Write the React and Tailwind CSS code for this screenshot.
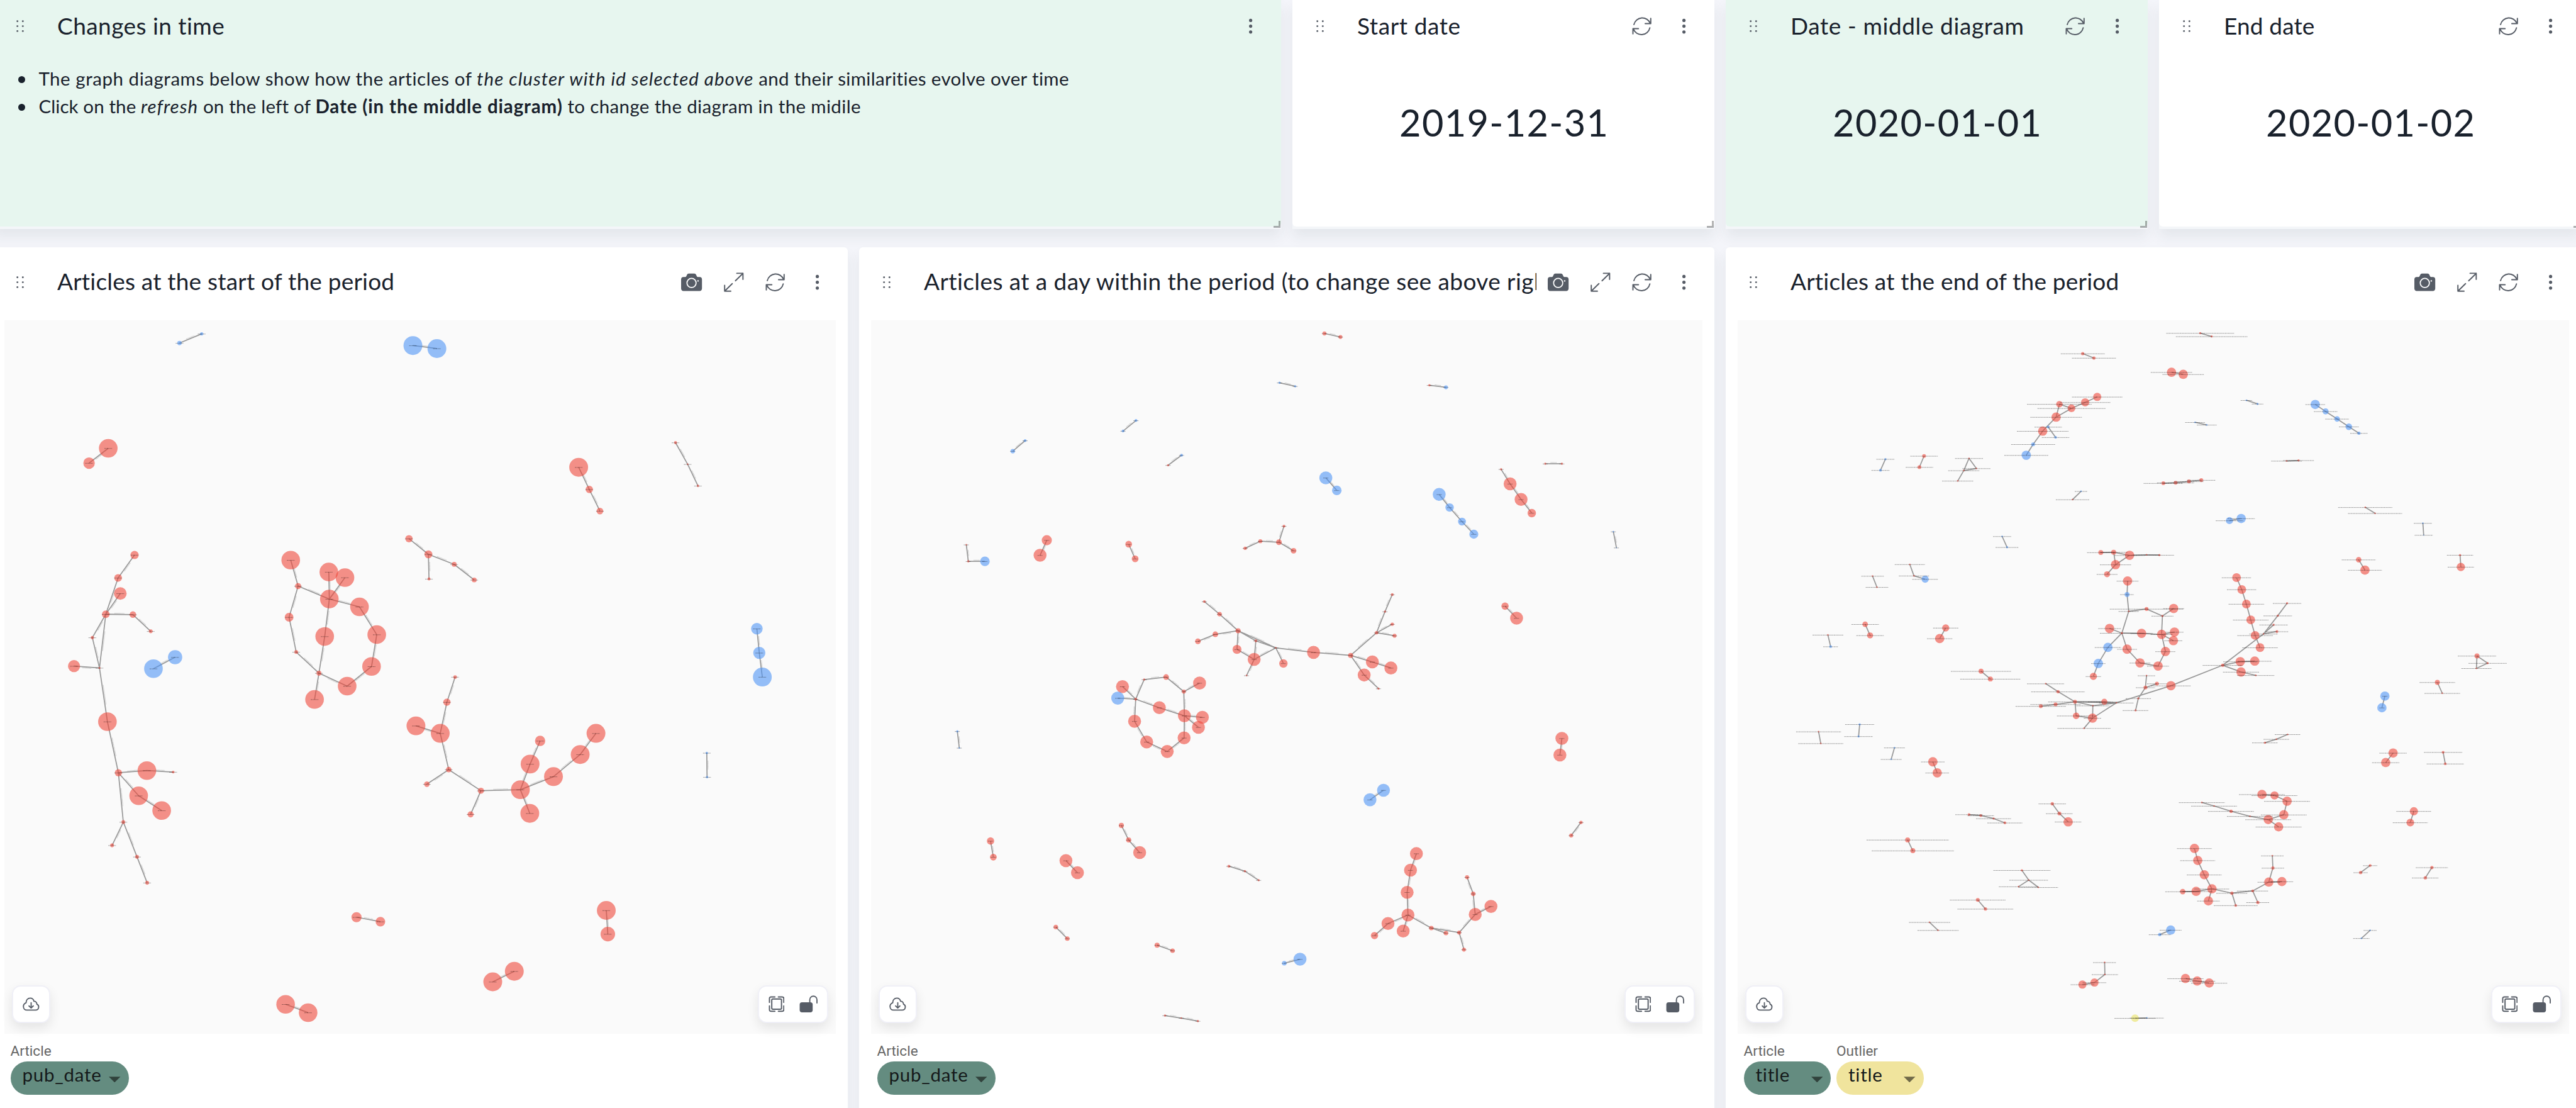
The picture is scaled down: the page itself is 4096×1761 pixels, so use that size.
import React from "react";

/* ------------------------------------------------------------------ */
/* Graph data. Each section has its own origin and unit; a cluster is  */
/* a list of nodes [x, y, r, labelHalfWidth, tone] plus edge pairs.    */
/* Clusters without edge pairs are simple chains.                      */
/* ------------------------------------------------------------------ */

const b = "b";

const START = [
  {
    o: [0, 550], s: [0.472, 0.6378], h: 14,
    c: [
      { n: [[656, 64, 8, 0, b], [737, 39, 6, 0, b]] },
      { n: [[396, 348, 34], [326, 388, 21]] },
      {
        n: [[492, 636, 15], [432, 698, 14], [440, 740, 23], [387, 796, 14], [486, 797, 12], [551, 842, 7], [338, 859, 6], [364, 941, 4], [271, 936, 22], [393, 1086, 34], [433, 1224, 13], [537, 1218, 34], [633, 1222, 5], [507, 1286, 34], [591, 1326, 34], [451, 1357, 7], [410, 1420, 7], [501, 1451, 7], [538, 1521, 7]],
        e: [[0, 1], [1, 3], [2, 3], [3, 4], [4, 5], [3, 6], [6, 7], [3, 7], [7, 8], [7, 9], [9, 10], [10, 11], [11, 12], [10, 13], [13, 14], [10, 15], [15, 16], [15, 17], [17, 18]],
      },
      { n: [[561, 943, 34, 0, b], [640, 912, 26, 0, b]] },
      {
        n: [[1062, 650, 34], [1089, 720, 11], [1056, 804, 16], [1082, 898, 7], [1165, 955, 9], [1149, 1026, 34], [1201, 682, 34], [1260, 697, 34], [1203, 755, 34], [1186, 856, 34], [1313, 776, 34], [1376, 851, 34], [1357, 937, 34], [1268, 990, 34]],
        e: [[0, 1], [1, 2], [2, 3], [3, 4], [4, 5], [1, 8], [6, 8], [7, 8], [8, 9], [9, 4], [8, 10], [10, 11], [11, 12], [12, 13], [13, 4]],
      },
    ],
  },
  {
    o: [660, 550], s: [0.523, 0.8661], h: 12.5,
    c: [
      { n: [[99, 52, 31, 0, b], [178, 58, 31, 0, b]] },
      { n: [[645, 294, 31], [680, 338, 12], [715, 381, 11]] },
      { n: [[964, 245, 5], [1004, 288, 3], [1038, 331, 4]] },
      { n: [[86, 436, 12], [150, 467, 13], [152, 516, 5], [235, 487, 8], [301, 518, 8]], e: [[0, 1], [1, 2], [1, 3], [3, 4]] },
      { n: [[1232, 615, 19, 0, b], [1240, 663, 20, 0, b], [1250, 711, 31, 0, b]] },
      { n: [[1067, 862, 4, 0, b], [1068, 910, 4, 0, b]] },
      {
        n: [[238, 711, 6], [211, 761, 12], [189, 823, 31], [109, 808, 31], [217, 895, 9], [145, 924, 9], [323, 937, 10], [289, 984, 10], [453, 935, 31], [485, 884, 31], [518, 838, 17], [484, 982, 31], [562, 909, 31], [650, 865, 31], [702, 823, 31]],
        e: [[0, 1], [1, 2], [2, 3], [2, 4], [4, 5], [4, 6], [6, 7], [6, 8], [8, 9], [9, 10], [8, 11], [8, 12], [12, 13], [13, 14]],
      },
      { n: [[736, 1175, 31], [741, 1222, 24]] },
      { n: [[362, 1317, 31], [433, 1296, 31]] },
    ],
  },
  {
    o: [0, 1500], s: [0.4847, 0.3333], h: 13.5,
    c: [{ n: [[1268, 238, 18], [1353, 261, 17]] }, { n: [[1016, 688, 33], [1096, 731, 33]] }],
  },
];

const MIDDLE = [
  {
    o: [1480, 550], s: [0.4847, 0.8661], h: 9,
    c: [
      { n: [[545, 262, 8, 0, b], [589, 241, 5, 0, b]] },
      { n: [[937, 222, 5, 0, b], [983, 201, 5, 0, b]] },
      { n: [[1097, 290, 4], [1145, 270, 5, 0, b]] },
      { n: [[1493, 126, 4, 0, b], [1549, 133, 4, 0, b]] },
      { n: [[380, 448, 3], [387, 481, 4], [446, 481, 17, 0, b]] },
      { n: [[666, 439, 18], [642, 469, 23]] },
      { n: [[957, 447, 12], [980, 476, 12]] },
      { n: [[1371, 455, 6], [1425, 441, 7], [1491, 443, 10], [1509, 411, 5], [1543, 460, 10]], e: [[0, 1], [1, 2], [2, 3], [2, 4]] },
      {
        n: [[1226, 561, 5], [1280, 586, 8], [1346, 619, 9], [1265, 626, 10], [1203, 640, 10], [1342, 656, 16], [1409, 639, 5], [1403, 676, 23], [1376, 708, 3], [1480, 653, 3], [1507, 684, 15], [1614, 662, 23], [1746, 668, 9], [1838, 623, 6], [1868, 581, 4], [1894, 547, 5], [1894, 606, 6], [1902, 629, 7], [1823, 681, 23], [1889, 693, 23], [1794, 707, 23], [1845, 734, 4]],
        e: [[0, 1], [1, 2], [2, 3], [3, 4], [2, 5], [5, 7], [2, 6], [2, 9], [6, 7], [7, 8], [7, 9], [6, 9], [9, 10], [9, 11], [11, 12], [12, 13], [13, 14], [14, 15], [13, 16], [13, 17], [12, 18], [18, 19], [12, 20], [20, 21]],
      },
      {
        n: [[935, 730, 23], [918, 753, 23, 0, b], [982, 755, 5], [1012, 716, 4], [1090, 711, 10], [1153, 740, 7], [1209, 723, 23], [1066, 772, 23], [1155, 788, 23], [1219, 791, 23], [1205, 811, 23], [1154, 832, 23], [1094, 859, 23], [1021, 840, 23], [978, 799, 23]],
        e: [[0, 2], [1, 2], [2, 3], [3, 4], [4, 5], [5, 6], [5, 8], [2, 7], [7, 8], [8, 9], [8, 10], [8, 11], [11, 12], [12, 13], [13, 14], [14, 2]],
      },
      { n: [[348, 819, 4, 0, b], [355, 852, 3, 0, b]] },
      { n: [[466, 1037, 13], [476, 1069, 12]] },
      { n: [[734, 1076, 23], [775, 1100, 23]] },
      { n: [[931, 1006, 9], [957, 1035, 9], [996, 1060, 23]] },
      { n: [[1313, 1087, 5], [1370, 1097, 4], [1419, 1115, 4]] },
      { n: [[698, 1208, 8], [739, 1231, 8]] },
      { n: [[1058, 1244, 9], [1113, 1255, 8]] },
      { n: [[1510, 1280, 8, 0, b], [1566, 1272, 23, 0, b]] },
      { n: [[1086, 1384, 4], [1144, 1389, 3], [1203, 1395, 4]] },
    ],
  },
  {
    o: [2220, 550], s: [0.4847, 0.8661], h: 9,
    c: [
      { n: [[126, 28, 7], [183, 35, 7]] },
      { n: [[499, 131, 4], [558, 135, 7, 0, b]] },
      { n: [[131, 315, 23, 0, b], [170, 340, 17, 0, b]] },
      { n: [[534, 348, 23, 0, b], [571, 374, 15, 0, b], [615, 402, 14, 0, b], [657, 427, 16, 0, b]] },
      { n: [[754, 298, 4], [786, 327, 23], [825, 358, 23], [863, 385, 15]] },
      { n: [[911, 287, 4], [970, 287, 4]] },
      { n: [[1153, 422, 3, 0, b], [1164, 454, 2, 0, b]] },
      { n: [[768, 570, 13], [809, 594, 23]] },
      { n: [[970, 833, 23], [963, 866, 23]] },
      { n: [[288, 955, 23, 0, b], [336, 936, 23, 0, b]] },
      { n: [[1038, 1000, 6], [1003, 1026, 7]] },
      {
        n: [[453, 1062, 23], [432, 1095, 23], [420, 1139, 23], [423, 1184, 23], [352, 1201, 23], [304, 1225, 13], [406, 1216, 23], [506, 1210, 8], [558, 1220, 8], [605, 1219, 7], [622, 1253, 7], [662, 1183, 23], [718, 1167, 23], [655, 1142, 8], [633, 1109, 7]],
        e: [[0, 1], [1, 2], [2, 3], [3, 4], [4, 5], [3, 6], [3, 7], [7, 8], [7, 9], [9, 10], [9, 11], [11, 12], [11, 13], [13, 14]],
      },
    ],
  },
];

const END = [
  {
    o: [2980, 550], s: [0.472, 0.4464], h: 50,
    c: [
      { n: [[1289, 132, 6, 80], [1330, 149, 6, 80]] },
      {
        n: [[1342, 299, 15, 92], [1298, 320, 15, 92], [1248, 343, 14, 124], [1204, 327, 12, 118], [1192, 377, 17, 94], [1143, 431, 17, 94], [1108, 482, 7, 80, b], [1083, 524, 17, 80, b]],
        e: [[0, 1], [1, 2], [2, 3], [2, 4], [3, 4], [4, 5], [5, 6], [6, 7]],
      },
      { n: [[1163, 415, 5, 50, b], [1190, 455, 5, 50, b]] },
      { n: [[569, 539, 4, 33, b], [551, 582, 5, 33, b]] },
      { n: [[710, 527, 7, 50], [693, 570, 7, 50]] },
      { n: [[874, 536, 3, 51], [901, 575, 3, 51], [855, 583, 3, 57], [833, 623, 3, 57]], e: [[0, 1], [1, 2], [0, 2], [2, 3]] },
      { n: [[1283, 663, 3, 23, b], [1252, 695, 3, 61]] },
      { n: [[995, 837, 3, 33, b], [1013, 879, 4, 42, b]] },
      { n: [[658, 945, 3, 55], [673, 989, 3, 55], [714, 1002, 13, 47, b]] },
      { n: [[522, 990, 3, 41], [538, 1033, 3, 41]] },
      { n: [[495, 1176, 10, 50], [513, 1219, 11, 50]] },
      { n: [[359, 1217, 3, 56], [369, 1262, 5, 27, b]] },
      { n: [[789, 1190, 13, 46], [767, 1231, 17, 46]] },
      { n: [[918, 1357, 9, 110], [952, 1387, 9, 110]] },
      {
        n: [[1355, 899, 9, 50], [1402, 898, 9, 50], [1460, 910, 17, 55], [1409, 946, 17, 57], [1378, 983, 11, 38], [1522, 908, 3, 50], [1569, 909, 4, 54]],
        e: [[0, 1], [1, 2], [1, 3], [2, 3], [3, 4], [2, 5], [5, 6]],
      },
      {
        n: [[1453, 1009, 17, 40], [1451, 1061, 9, 25, b], [1457, 1126, 3, 37], [1522, 1117, 7, 134], [1580, 1144, 4, 40], [1621, 1115, 17, 38], [1387, 1192, 17, 41], [1432, 1210, 4, 80], [1504, 1211, 17, 40], [1577, 1215, 17, 40], [1624, 1206, 17, 33], [1620, 1239, 17, 33], [1591, 1281, 17, 37], [1564, 1337, 17, 40], [1498, 1325, 17, 38], [1451, 1272, 17, 36], [1381, 1265, 17, 48, b], [1346, 1327, 17, 26, b], [1328, 1377, 13, 28]],
        e: [[0, 1], [1, 2], [2, 3], [3, 4], [4, 5], [4, 9], [2, 7], [6, 7], [7, 8], [8, 9], [9, 10], [9, 11], [9, 12], [12, 13], [13, 14], [14, 15], [15, 7], [7, 16], [16, 17], [17, 18]],
      },
      { n: [[1522, 1374, 3, 32], [1518, 1420, 7, 35], [1560, 1405, 7, 36], [1492, 1462, 4, 46], [1482, 1508, 4, 47]], e: [[0, 1], [1, 2], [1, 3], [3, 4]] },
      {
        n: [[1154, 1405, 3, 68], [1199, 1436, 6, 98], [1261, 1475, 7, 98], [1190, 1485, 7, 92], [1136, 1492, 7, 92], [1265, 1529, 12, 70], [1326, 1490, 3, 60], [1325, 1538, 17, 32], [1368, 1475, 11, 60], [1412, 1479, 3, 63], [1294, 1577, 3, 97], [1611, 1413, 17, 73], [1800, 1334, 6, 73], [1949, 1213, 3, 52], [2001, 1143, 4, 52], [2035, 1095, 4, 52], [1986, 1178, 4, 52], [1998, 1204, 5, 42], [1864, 1320, 17, 62], [1917, 1318, 17, 62], [1867, 1360, 17, 66], [1921, 1373, 3, 68]],
        e: [[0, 1], [1, 2], [2, 3], [3, 4], [2, 5], [5, 7], [2, 6], [6, 7], [2, 8], [8, 9], [6, 9], [7, 9], [7, 10], [2, 9], [9, 11], [11, 12], [12, 13], [13, 14], [14, 15], [13, 16], [13, 17], [12, 18], [18, 19], [12, 20], [20, 21]],
      },
    ],
  },
  {
    o: [3700, 550], s: [0.4707, 0.4464], h: 50,
    c: [
      { n: [[326, 996, 16, 54], [345, 1042, 16, 54], [362, 1098, 16, 65], [378, 1159, 16, 65], [394, 1219, 16, 65], [412, 1266, 16, 65]] },
      { n: [[193, 53, 4, 124], [235, 66, 4, 131]] },
      { n: [[88, 204, 17, 76], [131, 212, 17, 76]] },
      { n: [[362, 312, 3, 21, b], [403, 326, 4, 21, b]] },
      { n: [[174, 397, 3, 36, b], [217, 407, 3, 36, b]] },
      { n: [[614, 328, 17, 36, b], [652, 355, 11, 43, b], [694, 384, 10, 43, b], [737, 414, 12, 36, b], [774, 439, 6, 32, b]] },
      { n: [[509, 546, 3, 56], [553, 544, 4, 56]] },
      { n: [[58, 632, 7, 72], [103, 630, 7, 68], [152, 625, 7, 54], [197, 620, 7, 52]] },
      { n: [[300, 776, 13, 50, b], [343, 768, 17, 50, b]] },
      { n: [[797, 725, 3, 99], [833, 748, 3, 99]] },
      { n: [[1008, 786, 3, 33, b], [1011, 832, 2, 33, b]] },
      { n: [[773, 927, 10, 62], [796, 967, 17, 62]] },
      { n: [[1144, 909, 4, 48], [1147, 955, 15, 48]] },
      { n: [[1206, 1298, 9, 70], [1245, 1326, 4, 70], [1204, 1346, 3, 55]], e: [[0, 1], [1, 2], [2, 0]] },
      { n: [[1061, 1400, 9, 65], [1079, 1442, 3, 65]] },
      { n: [[869, 1453, 17, 9, b], [858, 1498, 17, 9, b]] },
    ],
  },
  {
    o: [2980, 1230], s: [0.472, 0.4324], h: 50,
    c: [
      { n: [[325, 69, 3, 82], [333, 116, 3, 82]] },
      { n: [[475, 40, 4, 53, b], [471, 88, 4, 52, b]] },
      { n: [[602, 133, 3, 38, b], [590, 179, 3, 38, b]] },
      { n: [[742, 189, 17, 43], [758, 233, 17, 43]] },
      { n: [[874, 399, 5, 50], [917, 403, 5, 48], [964, 415, 4, 64], [1005, 432, 5, 64]] },
      { n: [[1178, 356, 6, 50], [1204, 395, 7, 49], [1236, 428, 17, 49]] },
      { n: [[650, 500, 9, 150], [669, 543, 9, 150]] },
      { n: [[1067, 621, 4, 104], [1092, 660, 3, 71], [1055, 686, 3, 72], [1127, 689, 3, 72]], e: [[0, 1], [1, 2], [1, 3]] },
      { n: [[906, 739, 7, 102], [934, 775, 6, 102]] },
      { n: [[730, 828, 3, 75], [761, 860, 3, 75]] },
      { n: [[1369, 988, 3, 42], [1370, 1036, 3, 48], [1332, 1068, 15, 43], [1288, 1076, 15, 43]] },
      { n: [[1480, 1210, 14, 75, "y"], [1523, 1209, 3, 62, b]] },
    ],
  },
  {
    o: [3700, 1230], s: [0.4707, 0.4324], h: 50,
    c: [
      { n: [[513, 80, 3, 47], [472, 99, 3, 47], [430, 113, 4, 47]] },
      { n: [[899, 154, 17, 50], [872, 192, 17, 50]] },
      { n: [[1082, 151, 5, 70], [1090, 197, 5, 68]] },
      {
        n: [[199, 351, 3, 84], [244, 365, 3, 84], [306, 386, 6, 84], [375, 406, 3, 84], [442, 419, 17, 84], [480, 448, 17, 84], [499, 400, 17, 84], [511, 346, 17, 84], [465, 323, 15, 84], [419, 319, 17, 84]],
        e: [[0, 1], [1, 2], [2, 3], [3, 4], [4, 5], [4, 6], [6, 7], [7, 8], [8, 9]],
      },
      { n: [[975, 386, 15, 64], [962, 431, 14, 64]] },
      { n: [[815, 602, 5, 26], [780, 630, 6, 26]] },
      { n: [[1041, 610, 6, 59], [1017, 651, 6, 49]] },
      { n: [[815, 860, 3, 24, b], [783, 892, 3, 30, b]] },
      { n: [[45, 877, 6, 40, b], [85, 859, 17, 40, b]] },
      { n: [[139, 1052, 17, 66], [182, 1062, 17, 66], [226, 1070, 17, 66]] },
      {
        n: [[172, 534, 17, 64], [184, 582, 17, 64], [208, 639, 17, 64], [236, 695, 17, 64], [178, 705, 17, 60], [129, 706, 10, 64], [223, 743, 17, 41], [309, 712, 6, 57], [323, 761, 5, 80], [385, 703, 5, 57], [404, 749, 6, 42], [444, 668, 17, 41], [492, 666, 17, 41], [459, 612, 6, 41], [457, 563, 3, 41]],
        e: [[0, 1], [1, 2], [2, 3], [3, 4], [4, 5], [3, 6], [3, 7], [7, 8], [7, 9], [9, 10], [9, 11], [11, 12], [11, 13], [13, 14]],
      },
    ],
  },
];

const TONES = { r: "#ee483a", b: "#4e94f5", y: "#e9e364" };

function Graph({ sections, left, edgeLabels }) {
  const clusters = sections.flatMap(({ o, s, c, h }) =>
    c.map(({ n, e }) => ({
      nodes: n.map(([x, y, r, half, tone]) => ({
        x: o[0] + x * s[0],
        y: o[1] + y * s[1],
        r: r * s[0],
        half: (half || h) * s[0],
        fill: TONES[tone || "r"],
      })),
      edges: e || n.slice(1).map((_, i) => [i, i + 1]),
    }))
  );
  return (
    <svg viewBox={`${left} 551.5 1432 1228.5`} className="block h-full w-full" preserveAspectRatio="none">
      {clusters.map(({ nodes, edges }, k) => (
        <g key={k}>
          {edges.map(([i, j], m) => {
            const p = nodes[i];
            const q = nodes[j];
            const len = Math.hypot(q.x - p.x, q.y - p.y) || 1;
            const nx = ((q.y - p.y) / len) * 2;
            const ny = (-(q.x - p.x) / len) * 2;
            const at = (t) => [p.x + (q.x - p.x) * t + nx, p.y + (q.y - p.y) * t + ny];
            const [ax, ay] = at(0.32);
            const [bx, by] = at(0.68);
            return (
              <g key={m}>
                <line x1={p.x} y1={p.y} x2={q.x} y2={q.y} stroke="#999999" strokeWidth="1.9" />
                {edgeLabels && <line x1={ax} y1={ay} x2={bx} y2={by} stroke="#999999" strokeOpacity="0.5" strokeWidth="1.3" strokeDasharray="1.6 0.7" />}
              </g>
            );
          })}
          {nodes.map(({ x, y, r, fill }, m) => (
            <circle key={m} cx={x} cy={y} r={r} fill={fill} fillOpacity="0.6" />
          ))}
          {nodes.map(({ x, y, half }, m) => (
            <line key={m} x1={x - half} x2={x + half} y1={y + 0.3} y2={y + 0.3} stroke="#000000" strokeOpacity="0.42" strokeWidth="1" strokeDasharray="2.2 0.5 1.3 0.6" />
          ))}
        </g>
      ))}
    </svg>
  );
}

/* ------------------------------- icons ------------------------------ */

function Svg({ children, className = "size-[33.2px]", box = "0 0 36 36" }) {
  return (
    <svg viewBox={box} className={`block shrink-0 ${className}`} fill="none" stroke="#565c66" strokeWidth="2.2" strokeLinecap="round" strokeLinejoin="round">
      {children}
    </svg>
  );
}

const Camera = () => (
  <Svg>
    <path d="M4.2 9H7.5C9 8.6 9.2 7 10 5.4C10.8 3.8 11.6 3 13.2 3H22.8C24.4 3 25.2 3.8 26 5.4C26.8 7 27 8.6 28.5 9H31.8Q36 9 36 13.2V28.5Q36 33 31.8 33H4.2Q0 33 0 28.5V13.2Q0 9 4.2 9Z" fill="#565c66" stroke="none" />
    <circle cx="18" cy="19.2" r="7.9" stroke="#ffffff" strokeWidth="1.9" />
    <circle cx="29.2" cy="15.6" r="1.3" fill="#ffffff" stroke="none" />
  </Svg>
);

const Expand = () => (
  <Svg>
    <path d="M21 15.4L34 2.7M23.4 2.6H34V13M15.6 20.4L2.4 33.3M2.4 23.4V33.4H13" strokeWidth="2.1" />
  </Svg>
);

const Refresh = () => (
  <Svg>
    <path d="M4.4 15.2A14.8 14.8 0 0 1 32.6 13.3M33.4 4.7V13.6H23.8M31.9 20.8A14.8 14.8 0 0 1 3.4 22.6M2.7 31.3V22.3H12.2" strokeWidth="2.1" />
  </Svg>
);

const Dots = () => (
  <Svg>
    <g fill="#565c66" stroke="none">
      <circle cx="18" cy="8" r="2.8" />
      <circle cx="18" cy="18" r="2.8" />
      <circle cx="18" cy="28" r="2.8" />
    </g>
  </Svg>
);

const Grip = () => (
  <Svg className="h-[33.2px] w-[22px]" box="0 0 24 36">
    <g fill="#565c66" stroke="none">
      {[9.5, 18, 26.5].map((y) => (
        <React.Fragment key={y}>
          <circle cx="7.3" cy={y} r="1.6" />
          <circle cx="16.7" cy={y} r="1.6" />
        </React.Fragment>
      ))}
    </g>
  </Svg>
);

const CloudDown = () => (
  <Svg className="h-[22px] w-[27px]" box="0 0 29 23.6">
    <path d="M7.2 21.9H22.2A5.4 5.4 0 0 0 24.2 11.6C24.3 8.6 22.2 6.9 19.4 6.9C18.6 3.6 16.2 1.5 12.9 1.5C8.6 1.5 5.7 4.9 6 9.2C3 10.4 1.3 12.6 1.3 15.6C1.3 19.4 3.8 21.9 7.2 21.9ZM14.5 9.2V18M10.8 14.8L14.5 18.3L18.2 14.8" strokeWidth="2" />
  </Svg>
);

const Fit = () => (
  <Svg className="size-[25.8px]" box="0 0 28 28">
    <path d="M11 1.6H4.4Q1.6 1.6 1.6 4.4V11M17 1.6H23.6Q26.4 1.6 26.4 4.4V11M11 26.4H4.4Q1.6 26.4 1.6 23.6V17M17 26.4H23.6Q26.4 26.4 26.4 23.6V17" strokeWidth="2.1" />
    <rect x="5.6" y="5.2" width="16.8" height="17.6" rx="1.8" strokeWidth="2.1" />
  </Svg>
);

const Unlock = () => (
  <Svg className="h-[27.7px] w-[29.5px]" box="0 0 32 30">
    <rect x="0.6" y="12" width="22.4" height="17.2" rx="4" fill="#565c66" stroke="none" />
    <path d="M18 13V7.5A6.2 6.2 0 0 1 30.4 7.5V13" strokeWidth="2" />
  </Svg>
);

/* ------------------------------ widgets ----------------------------- */

function Header({ title, tracking, children }) {
  return (
    <header className="flex h-[84px] shrink-0 items-center pl-[32.5px] pr-[31.5px]">
      <Grip />
      <h2 className={`mb-[3px] ml-[48.5px] min-w-0 flex-1 overflow-hidden whitespace-nowrap text-[37px] leading-[50px] ${tracking}`}>{title}</h2>
      <div className="ml-[18px] flex items-center gap-[33.3px]">{children}</div>
    </header>
  );
}

function TopCard({ width, tint, title, tracking, refresh, children }) {
  return (
    <section className={`relative h-[364px] shrink-0 bg-[#f4f6f9] shadow-[0_12px_20px_rgba(40,60,60,0.08)] ${width}`}>
      <div className={`flex h-[360px] flex-col rounded-b-[6px] ${tint}`}>
        <Header title={title} tracking={tracking}>
          {refresh && <Refresh />}
          <Dots />
        </Header>
        {children}
      </div>
      <span className="absolute bottom-[2px] right-[1px] size-[11px] border-b-[3.5px] border-r-[3.5px] border-black/30" />
    </section>
  );
}

function DateCard({ title, date, tint, tracking }) {
  return (
    <TopCard width="w-[670.5px]" tint={tint} title={title} tracking={tracking} refresh>
      <p className="mt-[72px] pl-[3px] text-center text-[59.5px] leading-[76px] tracking-[1.3px]">{date}</p>
    </TopCard>
  );
}

function Picker({ label, value, width, color, caret }) {
  return (
    <div>
      <div className="font-['Roboto',sans-serif] text-[22.6px] leading-[26px] text-[#666666]">{label}</div>
      <div className={`mt-[3px] flex h-[53.5px] items-start justify-between rounded-full pl-[19px] pr-[13px] pt-[3px] ${width} ${color}`}>
        <span className="text-[29.5px] leading-[36px] tracking-[0.75px] text-[#15191a]">{value}</span>
        <svg viewBox="0 0 20 10" className="mt-[21px] block h-[9.5px] w-[18.5px]">
          <path d="M0 0H20L10 10Z" fill={caret} />
        </svg>
      </div>
    </div>
  );
}

const floating = "absolute bottom-[16.5px] flex h-[60px] items-center rounded-[14px] border-2 border-[#f0f0f7] bg-white shadow-[0_8px_18px_rgba(0,0,0,0.09)]";

function GraphCard({ title, tracking, sections, left, edgeLabels, children }) {
  return (
    <section className="flex h-[1400px] w-[1359.5px] shrink-0 flex-col rounded-[6px] bg-white shadow-[0_12px_20px_rgba(40,60,60,0.08)]">
      <div className="h-[13.5px]" />
      <Header title={title} tracking={tracking}>
        <Camera />
        <Expand />
        <Refresh />
        <Dots />
      </Header>
      <div className="relative ml-[19.4px] mt-[18px] h-[1134px] w-[1321.7px] bg-[#fafafa]">
        <Graph sections={sections} left={left} edgeLabels={edgeLabels} />
        <div className={`${floating} left-[12px] w-[61px] justify-center`}>
          <CloudDown />
        </div>
        <div className={`${floating} right-[12.5px] w-[112px] justify-between pl-[15px] pr-[14px]`}>
          <Fit />
          <Unlock />
        </div>
      </div>
      <div className="ml-[28.5px] mt-[15px] flex gap-[9px]">{children}</div>
    </section>
  );
}

function Bullet({ children }) {
  return (
    <li className="flex items-center whitespace-pre">
      <span className="-ml-[32px] mr-[21px] mt-[3px] size-[11px] rounded-full bg-[#19212c]" />
      <span>{children}</span>
    </li>
  );
}

const green = "bg-[#648c80]";

export default function App() {
  return (
    <main className="h-[1761px] w-[4096px] overflow-hidden bg-[#f4f5fa] font-['Lato',sans-serif] text-[#19212c]">
      <div className="-ml-[12px] flex w-[4140px] flex-col gap-[29px]">
        <div className="flex gap-[18.5px]">
          <TopCard width="w-[2048.5px]" tint="bg-[#e7f6ef]" title="Changes in time" tracking="tracking-[0.45px]">
            <ul className="mt-[18.5px] list-none pl-[73.4px] text-[29.5px] leading-[44.3px]">
              <Bullet>
                <span className="tracking-[0.54px]">The graph diagrams below show how the articles of </span>
                <em className="tracking-[1.02px]">the cluster with id selected above</em>
                <span className="tracking-[0.34px]"> and their similarities evolve over time</span>
              </Bullet>
              <Bullet>
                <span className="tracking-[0.1px]">Click on the </span>
                <em className="tracking-[1.02px]">refresh</em>
                <span className="tracking-[0.2px]"> on the left of </span>
                <strong className="tracking-[0.85px]">Date (in the middle diagram)</strong>
                <span className="tracking-[0.35px]"> to change the diagram in the midile</span>
              </Bullet>
            </ul>
          </TopCard>
          <DateCard title="Start date" date="2019-12-31" tint="bg-white" tracking="tracking-[0.6px]" />
          <DateCard title="Date - middle diagram" date="2020-01-01" tint="bg-[#e7f6ef]" tracking="tracking-[0.6px]" />
          <DateCard title="End date" date="2020-01-02" tint="bg-white" tracking="tracking-[0.15px]" />
        </div>
        <div className="flex gap-[18.5px]">
          <GraphCard title="Articles at the start of the period" tracking="tracking-[0.2px]" sections={START} left={8} edgeLabels>
            <Picker label="Article" value="pub_date" width="w-[188px]" color={green} caret="#31423c" />
          </GraphCard>
          <GraphCard title="Articles at a day within the period (to change see above right)" tracking="tracking-[0.41px]" sections={MIDDLE} left={1500} edgeLabels>
            <Picker label="Article" value="pub_date" width="w-[188px]" color={green} caret="#31423c" />
          </GraphCard>
          <GraphCard title="Articles at the end of the period" tracking="tracking-[0.2px]" sections={END} left={2994}>
            <Picker label="Article" value="title" width="w-[138.5px]" color={green} caret="#31423c" />
            <Picker label="Outlier" value="title" width="w-[138.5px]" color="bg-[#f0e49d]" caret="#6f6948" />
          </GraphCard>
        </div>
      </div>
    </main>
  );
}
